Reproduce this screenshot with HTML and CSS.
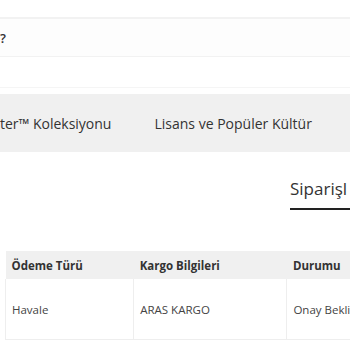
FILE: index.html
```html
<!DOCTYPE html>
<html lang="tr">
<head>
    <meta charset="UTF-8">
    <meta name="viewport" content="width=device-width, initial-scale=1.0">
    <title>Siparişlerim</title>
    <link rel="stylesheet" href="styles.css">
</head>
<body>
    <div class="notice">
        <p class="notice-text">?</p>
    </div>
    <div class="spacer"></div>

    <nav class="menu">
        <a href="#" class="menu-item">ter™ Koleksiyonu</a>
        <a href="#" class="menu-item">Lisans ve Popüler Kültür</a>
    </nav>

    <div class="page-title">
        <h1>Siparişl</h1>
    </div>

    <div class="orders">
        <table class="orders-table">
            <thead>
                <tr>
                    <th class="col-pay">Ödeme Türü</th>
                    <th class="col-cargo">Kargo Bilgileri</th>
                    <th class="col-status">Durumu</th>
                </tr>
            </thead>
            <tbody>
                <tr>
                    <td>Havale</td>
                    <td>ARAS KARGO</td>
                    <td>Onay Bekliy</td>
                </tr>
            </tbody>
        </table>
    </div>
</body>
</html>
```

FILE: styles.css
```css
body {
    margin: 0;
    font-family: 'Open Sans', sans-serif;
    color: #333;
    background-color: #fff;
    overflow: hidden;
}

.notice {
    margin-top: 17px;
    border-top: 2px solid #f2f2f2;
    border-bottom: 1px solid #f2f2f2;
    background-color: #fdfdfd;
    height: 37px;
    display: flex;
    align-items: center;
}

.notice-text {
    margin: 0;
    font-size: 13px;
    font-weight: 600;
}

.spacer {
    height: 30px;
    border-bottom: 1px solid #f5f5f5;
}

.menu {
    margin-top: 6px;
    background-color: #f0f0f0;
    height: 58px;
    display: flex;
    align-items: center;
    gap: 43px;
    white-space: nowrap;
}

.menu-item {
    color: #333;
    text-decoration: none;
    font-size: 14px;
    font-weight: 500;
}

.page-title {
    padding-left: 290px;
    margin-top: 25px;
    white-space: nowrap;
}

.page-title h1 {
    margin: 0;
    font-size: 17px;
    font-weight: 500;
    padding-bottom: 8px;
    border-bottom: 2px solid #222;
}

.orders {
    margin-top: 41px;
    padding-left: 5px;
}

.orders-table {
    border-collapse: collapse;
    table-layout: fixed;
    width: 420px;
    white-space: nowrap;
}

.orders-table th {
    background-color: #f0f0f0;
    font-size: 11.5px;
    font-weight: 700;
    text-align: left;
    height: 28px;
    padding: 0 6px;
}

.orders-table td {
    font-size: 11.5px;
    color: #444;
    height: 60px;
    padding: 0 6px;
    border: 1px solid #eee;
    border-top: none;
}

.col-pay {
    width: 111px;
}

.col-cargo {
    width: 135px;
}

.col-status {
    width: 120px;
}
```
